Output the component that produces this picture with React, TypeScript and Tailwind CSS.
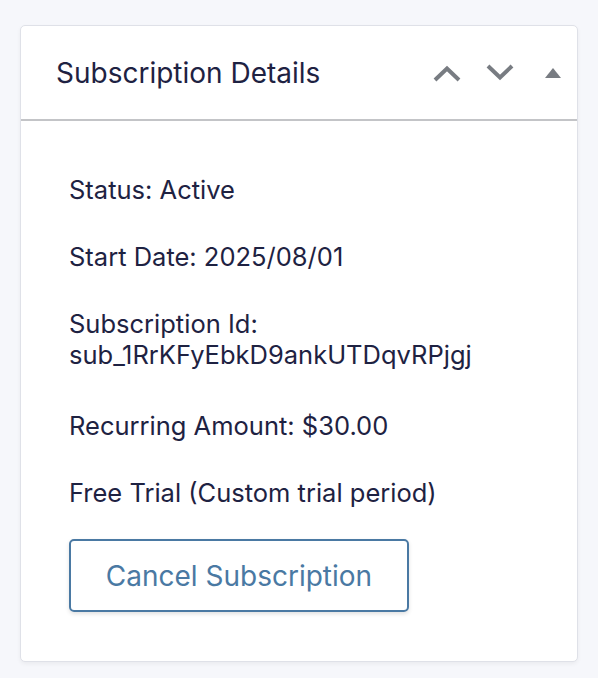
const fields = [
  'Status: Active',
  'Start Date: 2025/08/01',
];

export default function App() {
  return (
    <div className="min-h-[678px] bg-[#f6f7fb] pt-[25px] pl-[20px] pr-[20px] font-['Inter',sans-serif] text-[#1e2242]">
      <div className="w-[558px] rounded-[5px] border border-[#dfe1e8] bg-white shadow-[0_2px_4px_rgba(0,0,0,0.05)]">
        <div className="flex h-[95px] items-center justify-between border-b-2 border-[#c3c4c7] pl-[35px] pr-[16px]">
          <h2 className="text-[28px] leading-none">Subscription Details</h2>
          <div className="flex items-center text-[#787c82]">
            <svg width="30" height="18" viewBox="0 0 30 18" fill="none" stroke="currentColor" strokeWidth="4">
              <path d="M3 16 L15 4.5 L27 16" />
            </svg>
            <svg className="ml-[23px]" width="30" height="18" viewBox="0 0 30 18" fill="none" stroke="currentColor" strokeWidth="4">
              <path d="M3 2 L15 13.5 L27 2" />
            </svg>
            <svg className="ml-[30px]" width="16" height="10" viewBox="0 0 16 10" fill="currentColor">
              <path d="M8 0 L16 10 L0 10 Z" />
            </svg>
          </div>
        </div>
        <div className="px-[48px] pt-[53px] pb-[49px] text-[25.5px] leading-[31px]">
          {fields.map((f) => (
            <p key={f} className="mb-[36px]">{f}</p>
          ))}
          <p className="mb-[40px]">
            Subscription Id:
            <br />
            sub_1RrKFyEbkD9ankUTDqvRPjgj
          </p>
          <p className="mb-[36px]">Recurring Amount: $30.00</p>
          <p className="mb-[31px]">Free Trial (Custom trial period)</p>
          <button className="h-[73px] w-[340px] rounded-[5px] border-2 border-[#4a79a3] text-[28px] leading-none text-[#4a79a3] shadow-[0_2px_4px_rgba(0,0,0,0.12)]">
            Cancel Subscription
          </button>
        </div>
      </div>
    </div>
  );
}
